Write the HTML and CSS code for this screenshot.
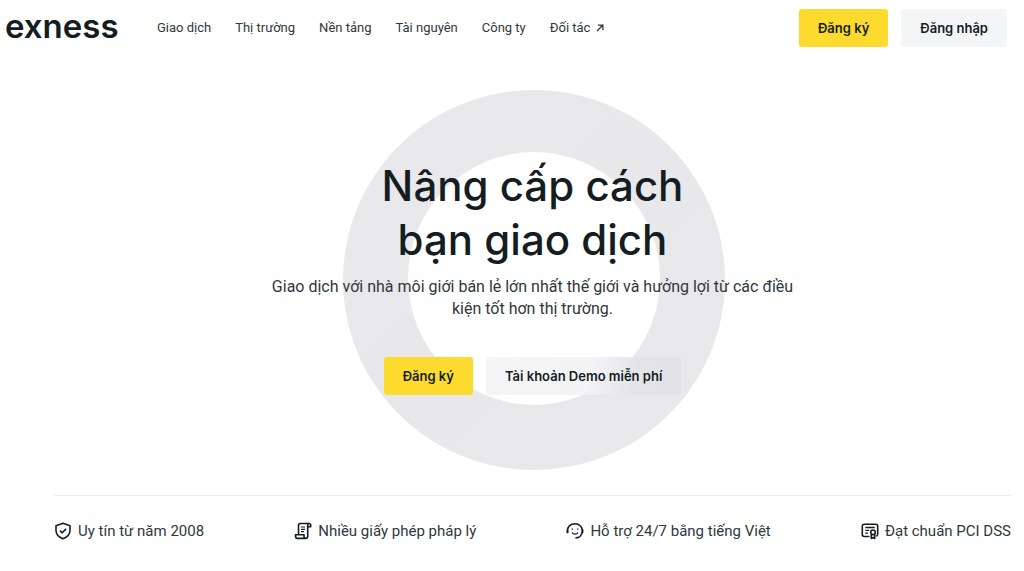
FILE: index.html
```html
<!DOCTYPE html>
<html lang="vi">
<head>
<meta charset="utf-8">
<meta name="viewport" content="width=device-width, initial-scale=1">
<title>Exness</title>
<link rel="stylesheet" href="styles.css">
</head>
<body>
<header class="header">
  <a class="logo" href="#">exness</a>
  <nav class="nav">
    <a href="#">Giao dịch</a>
    <a href="#">Thị trường</a>
    <a href="#">Nền tảng</a>
    <a href="#">Tài nguyên</a>
    <a href="#">Công ty</a>
    <a class="nav-external" href="#">Đối tác
      <svg class="arrow" viewBox="0 0 8 8" aria-hidden="true"><path d="M1 7 6.7 1.3M1.8 1.1H6.9V6.2"/></svg>
    </a>
  </nav>
  <div class="header-actions">
    <button class="btn btn-primary" type="button">Đăng ký</button>
    <button class="btn btn-secondary" type="button">Đăng nhập</button>
  </div>
</header>
<main class="main">
  <section class="hero">
    <svg class="ring" viewBox="0 0 382 380" aria-hidden="true">
      <defs>
        <linearGradient id="ring-fill" x1="0" y1="0" x2="1" y2="1">
          <stop offset="0" stop-color="#e9e9eb"/>
          <stop offset="0.5" stop-color="#e8e8eb"/>
          <stop offset="1" stop-color="#e9e9eb"/>
        </linearGradient>
      </defs>
      <path fill="url(#ring-fill)" fill-rule="evenodd" d="M191 0a191 190 0 1 1 0 380a191 190 0 1 1 0-380ZM191 62a126 126.500 0 1 0 0 253a126 126.500 0 1 0 0-253Z"/>
    </svg>
    <h1 class="title">Nâng cấp cách<br>bạn giao dịch</h1>
    <p class="lead">Giao dịch với nhà môi giới bán lẻ lớn nhất thế giới và hưởng lợi từ các điều kiện tốt hơn thị trường.</p>
    <div class="hero-actions">
      <button class="btn btn-primary" type="button">Đăng ký</button>
      <button class="btn btn-glass" type="button">Tài khoản Demo miễn phí</button>
    </div>
  </section>
  <ul class="facts">
    <li>
      <svg class="icon" viewBox="0 0 18 18" aria-hidden="true"><path d="M9 1.300 16 3.700V8.500C16 12.500 13 15.200 9 16.700C5 15.200 2 12.500 2 8.500V3.700Z"/><path d="m6 8.700 2.200 2.100 3.900-3.900"/></svg>
      <span>Uy tín từ năm 2008</span>
    </li>
    <li>
      <svg class="icon" viewBox="0 0 18 18" aria-hidden="true"><path d="M4.500 12.500V3.500C4.500 2.200 5.200 1.500 6.500 1.500H15C16.200 1.500 16.700 2.200 16.700 3.200V4.700H13.700V14.200C13.700 15.600 13 16.400 11.800 16.400H3.500C2.200 16.400 1.500 15.600 1.500 14.200V12.700H10V14.500C10 15.700 10.700 16.400 11.800 16.400M13.700 4.700V3.200C13.700 2.200 14.200 1.500 15 1.500"/><path d="M7 5H11M7 7.300H11M7 9.600H10" stroke-width="1.200"/></svg>
      <span>Nhiều giấy phép pháp lý</span>
    </li>
    <li>
      <svg class="icon" viewBox="0 0 18 18" aria-hidden="true"><path d="M1.500 11V8.700C1.500 4.500 4.700 1.700 9 1.700S16.300 4.700 16.300 8.700C16.300 13 13.500 15.700 9.500 15.900"/><path d="M1.500 7.700V11.200M16.600 7.200V11"/><path d="M6.300 6.500V7.700M11.700 6.500V7.700M6 10.500C7.300 12.600 10.700 12.600 12 10.500" stroke-width="1.300"/></svg>
      <span>Hỗ trợ 24/7 bằng tiếng Việt</span>
    </li>
    <li>
      <svg class="icon" viewBox="0 0 18 18" aria-hidden="true"><path d="M8.500 14.500H3.200C2 14.500 1.300 13.800 1.300 12.600V4.200C1.300 3 2 2.300 3.200 2.300H14.800C16 2.300 16.700 3 16.700 4.200V12C16.700 13 16.300 13.800 15.300 14.200"/><path d="M4.300 5.500H13.700M4.300 8.300H8M4.300 11.100H7" stroke-width="1.300"/><circle cx="12" cy="10.300" r="2.300"/><path d="M10.300 12V16.500L12 15.500L13.700 16.500V12"/></svg>
      <span>Đạt chuẩn PCI DSS</span>
    </li>
  </ul>
</main>
</body>
</html>
```
FILE: styles.css
```css
* {
  box-sizing: border-box;
}

body {
  margin: 0;
  background: #fff;
  color: #141d22;
  font-family: Roboto, "Liberation Sans", sans-serif;
}

a {
  color: inherit;
  text-decoration: none;
}

.header {
  display: flex;
  align-items: center;
  height: 56px;
  padding: 0 17px 0 5px;
}

.logo {
  width: 152px;
  font-family: Inter, sans-serif;
  font-size: 33px;
  font-weight: 600;
  line-height: 40px;
  padding-bottom: 4px;
}

.nav {
  display: flex;
  gap: 24px;
  font-size: 13px;
  line-height: 20px;
  white-space: nowrap;
  color: #30383c;
}

.nav-external {
  display: flex;
  align-items: center;
  gap: 6px;
}

.arrow {
  width: 8px;
  height: 8px;
  fill: none;
  stroke: currentColor;
  stroke-width: 1.3;
}

.header-actions {
  display: flex;
  gap: 13px;
  margin-left: auto;
}

.btn {
  height: 38px;
  padding: 0 19px;
  border: 0;
  border-radius: 3px;
  color: #141d22;
  font-family: Inter, sans-serif;
  font-size: 13px;
  font-weight: 600;
  white-space: nowrap;
  cursor: pointer;
}

.btn-primary {
  background: #fddb2e;
}

.btn-secondary {
  background: #f4f5f7;
}

.btn-glass {
  background: linear-gradient(105deg, #f4f5f7 0%, #f3f4f6 52%, #e3e4e8 76%, #e1e2e6 100%);
}

.main {
  padding: 34px 13px 0 54px;
}

.hero {
  position: relative;
  display: flex;
  flex-direction: column;
  align-items: center;
  padding: 69px 0 100px;
  text-align: center;
}

.ring {
  position: absolute;
  top: 0;
  left: 50%;
  width: 382px;
  height: 380px;
  margin-left: -190px;
}

.title,
.lead,
.hero-actions {
  position: relative;
  margin: 0;
}

.title {
  font-family: Inter, sans-serif;
  font-size: 42px;
  font-weight: 500;
  line-height: 54px;
}

.lead {
  max-width: 550px;
  margin-top: 9px;
  font-size: 16px;
  line-height: 22px;
  color: #30383c;
}

.hero-actions {
  display: flex;
  gap: 13px;
  margin-top: 37px;
}

.facts {
  display: flex;
  justify-content: space-between;
  margin: 0;
  padding: 24px 0;
  border-top: 1px solid #ececee;
  list-style: none;
  font-size: 15px;
  line-height: 22px;
  white-space: nowrap;
  color: #30383c;
}

.facts li {
  display: flex;
  align-items: center;
  gap: 6px;
}

.icon {
  width: 18px;
  height: 18px;
  fill: none;
  stroke: #141d22;
  stroke-width: 1.6;
  stroke-linejoin: round;
}
```
